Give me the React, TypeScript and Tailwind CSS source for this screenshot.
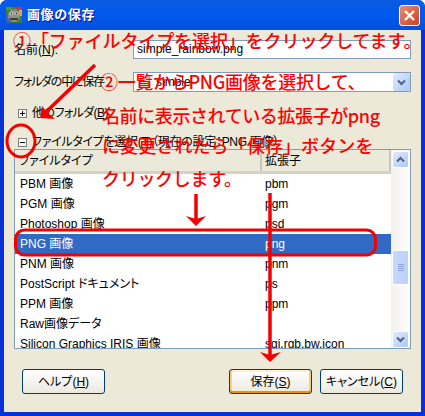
const uiFont = "font-['Liberation_Sans','Noto_Sans_CJK_JP',sans-serif] [font-feature-settings:'palt']";

const rows = [
  { name: "PBM 画像", ext: "pbm" },
  { name: "PGM 画像", ext: "pgm" },
  { name: "Photoshop 画像", ext: "psd" },
  { name: "PNG 画像", ext: "png", selected: true },
  { name: "PNM 画像", ext: "pnm" },
  { name: "PostScript ドキュメント", ext: "ps" },
  { name: "PPM 画像", ext: "ppm" },
  { name: "Raw画像データ", ext: "" },
  { name: "Silicon Graphics IRIS 画像", ext: "sgi,rgb,bw,icon" },
];

const notes = [
  { text: "①「ファイルタイプを選択」をクリックしてます。", cls: "left-[13px] top-[27px] tracking-[-0.1px]" },
  { text: "②一覧からPNG画像を選択して、", cls: "left-[100px] top-[68px] tracking-[-0.3px]" },
  { text: "名前に表示されている拡張子がpng", cls: "left-[102px] top-[102px] tracking-[-0.4px]" },
  { text: "に変更されたら「保存」ボタンを", cls: "left-[102px] top-[132px] tracking-[0.1px]" },
  { text: "クリックします。", cls: "left-[102px] top-[165px] tracking-[-0.3px]" },
];

const Chevron = ({ up }: { up?: boolean }) => (
  <svg width="9" height="7" viewBox="0 0 9 7" className={up ? "rotate-180" : ""}>
    <path d="M1 1.5 L4.5 5 L8 1.5" fill="none" stroke="#4d6185" strokeWidth="2" />
  </svg>
);

const ScrollButton = ({ up }: { up?: boolean }) => (
  <div className="h-[17px] w-[17px] flex items-center justify-center rounded-[2px] border border-white bg-gradient-to-br from-[#e1eafe] to-[#aec8f7]">
    <Chevron up={up} />
  </div>
);

const Expander = ({ open }: { open?: boolean }) => (
  <div className="w-[9px] h-[9px] border border-[#7f7f7f] bg-white flex items-center justify-center relative">
    <div className="w-[5px] h-px bg-black" />
    {!open && <div className="absolute w-px h-[5px] bg-black" />}
  </div>
);

const Button = ({ label, mnemonic, focused }: { label: string; mnemonic: string; focused?: boolean }) => (
  <div className={`w-[83px] h-[25px] rounded-[3px] border border-[#003c74] flex items-center justify-center text-[12px] text-black bg-gradient-to-b from-white to-[#ece9df] ${focused ? "shadow-[inset_0_-2px_0_#e59700,inset_2px_0_0_#f8cf7a,inset_-2px_0_0_#f8cf7a,inset_0_2px_0_#fff0cf]" : ""}`}>
    {label}(<span className="underline">{mnemonic}</span>)
  </div>
);

const WindowIcon = () => (
  <svg width="16" height="16" viewBox="0 0 16 16">
    <rect width="16" height="16" fill="#3f7a3a" />
    <rect x="0" y="0" width="6" height="3" fill="#3fa13a" />
    <rect x="9" y="0" width="7" height="3" fill="#c23b3b" />
    <rect x="13" y="3" width="3" height="6" fill="#d9b23a" />
    <rect x="0" y="9" width="3" height="7" fill="#3a5fc2" />
    <ellipse cx="8" cy="8.5" rx="6" ry="6.5" fill="#8f8f88" />
    <ellipse cx="5.5" cy="6.5" rx="2" ry="1.8" fill="#e4e4e0" />
    <ellipse cx="10.5" cy="6.5" rx="2" ry="1.8" fill="#d4d4d0" />
    <circle cx="5.5" cy="6.5" r="0.9" fill="#222" />
    <circle cx="10.5" cy="6.5" r="0.9" fill="#222" />
    <rect x="4" y="11" width="8" height="2" fill="#3b3b38" />
  </svg>
);

const Annotations = () => (
  <svg width="425" height="416" viewBox="0 0 425 416" className="absolute left-0 top-0 pointer-events-none">
    <g fill="none" stroke="#f40000">
      <path d="M95 65 L46 112" strokeWidth="3.5" />
      <ellipse cx="21" cy="141" rx="14" ry="16" strokeWidth="3" />
      <rect x="15.5" y="230" width="360" height="25" rx="9" strokeWidth="3" />
      <path d="M196 194 L196 219" strokeWidth="3.5" />
      <path d="M270 193 L270 355" strokeWidth="3.5" />
    </g>
    <path d="M186 216 L196 219 L206 216 L196 226 Z" fill="#f40000" />
    <path d="M260 352 L270 355 L281 352 L270 362 Z" fill="#f40000" />
    <path d="M40 118 L42 106 L47 112 L55 119 Z" fill="#f40000" />
  </svg>
);

export default function App() {
  return (
    <div className={`relative w-[425px] h-[416px] overflow-hidden bg-white ${uiFont}`}>
      <div className="w-full h-full flex flex-col rounded-t-[7px] bg-[#0831d9]">
        <div className="h-[30px] shrink-0 flex items-center pl-[6px] pr-[5px] rounded-t-[7px] bg-gradient-to-b from-[#0a5be0] via-[#0058ee] to-[#0350dc]">
          <WindowIcon />
          <span className="ml-[5px] text-white font-bold text-[13px] tracking-[0.6px] [font-feature-settings:normal] [text-shadow:1px_1px_0_#0f1089]">画像の保存</span>
          <div className="ml-auto w-[21px] h-[21px] rounded-[3px] border border-white bg-gradient-to-br from-[#e98a70] to-[#c8411f] flex items-center justify-center">
            <svg width="13" height="13" viewBox="0 0 13 13">
              <path d="M2 2 L11 11 M11 2 L2 11" stroke="#fff" strokeWidth="2.4" />
            </svg>
          </div>
        </div>
        <div className="flex-1 mx-[4px] mb-[4px] bg-[#ece9d8] px-[10px] pt-[10px] text-[12px] text-black">
          <div className="flex items-center h-[19px]">
            <div className="w-[119px]">名前(<span className="underline">N</span>):</div>
            <div className="flex-1 h-full border border-[#7f9db9] bg-white pl-[3px] leading-[17px]">simple_rainbow.png</div>
          </div>
          <div className="flex items-center h-[20px] mt-[13px]">
            <div className="w-[119px] tracking-[-1.2px]">フォルダの中に保存</div>
            <div className="flex-1 h-full border border-[#7f9db9] bg-white pl-[3px] flex items-center">
              <svg width="15" height="13" viewBox="0 0 15 13" className="ml-[1px] mr-[3px]">
                <path d="M1 3 H6 L7 1 H12 V12 H1 Z" fill="#d9d4b8" stroke="#9c9780" />
              </svg>
              <span>simple</span>
              <div className="ml-auto w-[17px] h-[18px] flex items-center justify-center rounded-[2px] bg-gradient-to-br from-[#e1eafe] to-[#aec8f7]">
                <Chevron />
              </div>
            </div>
          </div>
          <div className="flex items-center gap-[5px] h-[14px] mt-[14px] pl-[4px]">
            <Expander />
            <span className="tracking-[-0.6px]">他のフォルダ(<span className="underline">B</span>)</span>
          </div>
          <div className="flex items-center gap-[5px] h-[14px] mt-[15px] pl-[4px]">
            <Expander open />
            <span className="tracking-[-0.3px]">ファイルタイプを選択(<span className="underline">T</span>)（現在の設定：PNG 画像）</span>
          </div>
          <div className="flex h-[200px] border border-[#7f9db9] bg-white overflow-hidden">
            <div className="flex-1 min-w-0 overflow-hidden">
              <div className="flex h-[24px] bg-[#ebe9da] border-b-[3px] border-[#d6d2c2]">
                <div className="w-[247px] pl-[4px] leading-[23px] border-r-2 border-[#cbc7b8]">ファイルタイプ</div>
                <div className="flex-1 pl-[3px] leading-[23px] border-r-2 border-[#cbc7b8]">拡張子</div>
              </div>
              {rows.map((r) => (
                <div key={r.name} className={`flex h-[20px] leading-[20px] ${r.selected ? "bg-[#316ac5] text-white" : ""}`}>
                  <div className="w-[247px] pl-[5px]">{r.name}</div>
                  <div className="pl-[3px]">{r.ext}</div>
                </div>
              ))}
            </div>
            <div className="w-[19px] flex flex-col items-center pt-px bg-gradient-to-r from-[#f3f1ec] to-[#fefefe]">
              <ScrollButton up />
              <div className="w-[17px] h-[35px] mt-[82px] rounded-[2px] border border-white bg-gradient-to-r from-[#c9d8fc] to-[#bcd0fa] flex flex-col items-center justify-center gap-px">
                <div className="w-[6px] h-px bg-[#8ea5dc]" />
                <div className="w-[6px] h-px bg-[#8ea5dc]" />
                <div className="w-[6px] h-px bg-[#8ea5dc]" />
                <div className="w-[6px] h-px bg-[#8ea5dc]" />
              </div>
              <div className="flex-1" />
              <ScrollButton />
            </div>
          </div>
          <div className="flex justify-between px-[8px] mt-[20px]">
            <Button label="ヘルプ" mnemonic="H" />
            <div className="flex gap-[8px]">
              <Button label="保存" mnemonic="S" focused />
              <Button label="キャンセル" mnemonic="C" />
            </div>
          </div>
        </div>
      </div>
      <Annotations />
      {notes.map((n) => (
        <div key={n.text} className={`absolute whitespace-nowrap text-[18px] leading-[26px] font-medium text-[#ff0000] font-['Noto_Sans_CJK_JP',sans-serif] [font-feature-settings:normal] ${n.cls}`}>
          {n.text}
        </div>
      ))}
    </div>
  );
}
